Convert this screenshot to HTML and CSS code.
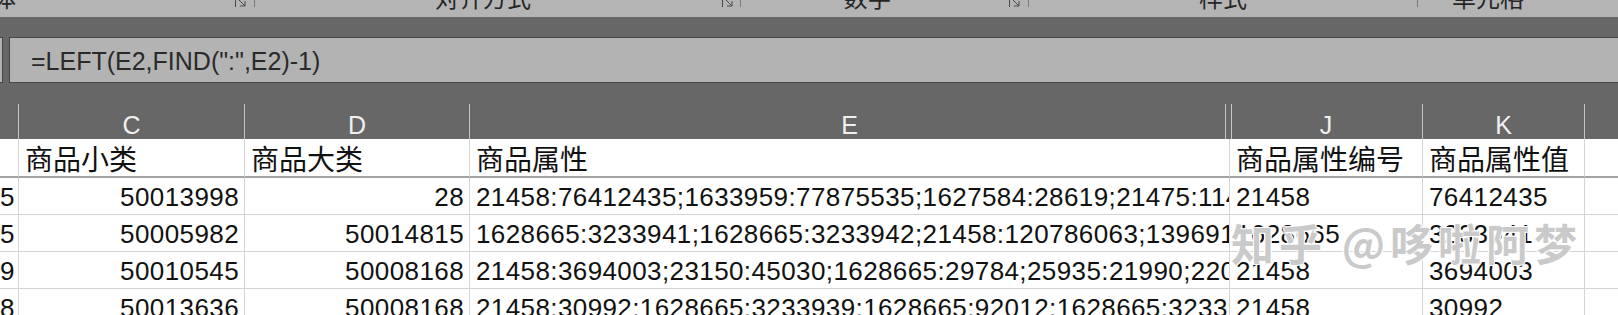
FILE: index.html
```html
<!DOCTYPE html>
<html lang="zh-CN">
<head>
<meta charset="utf-8">
<title>Excel</title>
<link rel="stylesheet" href="styles.css">
</head>
<body>
<div class="ribbon">
  <div class="grp g1"><span class="lbl">字体</span><svg class="launch" viewBox="0 0 13 13"><path d="M1 1.5H6M1.5 1V12M4 4L11 11M11 6V11H6" /></svg><i class="sep"></i></div>
  <div class="grp g2"><span class="lbl">对齐方式</span><svg class="launch" viewBox="0 0 13 13"><path d="M1 1.5H6M1.5 1V12M4 4L11 11M11 6V11H6" /></svg><i class="sep"></i></div>
  <div class="grp g3"><span class="lbl">数字</span><svg class="launch" viewBox="0 0 13 13"><path d="M1 1.5H6M1.5 1V12M4 4L11 11M11 6V11H6" /></svg><i class="sep"></i></div>
  <div class="grp g4"><span class="lbl">样式</span><i class="sep"></i></div>
  <div class="grp g5"><span class="lbl">单元格</span></div>
</div>

<div class="formula">
  <div class="namebox"></div>
  <div class="fx-input">=LEFT(E2,FIND(":",E2)-1)</div>
</div>

<div class="sheet">
  <div class="ch"></div>
  <div class="ch">C</div>
  <div class="ch">D</div>
  <div class="ch ch-e">E</div>
  <div class="ch ch-j">J</div>
  <div class="ch">K</div>
  <div class="ch ch-last"></div>

  <div class="hd"></div>
  <div class="hd">商品小类</div>
  <div class="hd">商品大类</div>
  <div class="hd">商品属性</div>
  <div class="hd">商品属性编号</div>
  <div class="hd">商品属性值</div>
  <div class="hd hd-last"></div>

  <div class="c num">5</div>
  <div class="c num">50013998</div>
  <div class="c num">28</div>
  <div class="c txt">21458:76412435;1633959:77875535;1627584:28619;21475:114968;20000:3271</div>
  <div class="c txt">21458</div>
  <div class="c txt">76412435</div>
  <div class="c last"></div>

  <div class="c num">5</div>
  <div class="c num">50005982</div>
  <div class="c num">50014815</div>
  <div class="c txt">1628665:3233941;1628665:3233942;21458:120786063;1396911:3233</div>
  <div class="c txt">1628665</div>
  <div class="c txt">3233941</div>
  <div class="c last"></div>

  <div class="c num">9</div>
  <div class="c num">50010545</div>
  <div class="c num">50008168</div>
  <div class="c txt">21458:3694003;23150:45030;1628665:29784;25935:21990;22000:3233</div>
  <div class="c txt">21458</div>
  <div class="c txt">3694003</div>
  <div class="c last"></div>

  <div class="c num">8</div>
  <div class="c num">50013636</div>
  <div class="c num">50008168</div>
  <div class="c txt">21458:30992;1628665:3233939;1628665:92012;1628665:3233940;2145</div>
  <div class="c txt">21458</div>
  <div class="c txt">30992</div>
  <div class="c last"></div>
</div>

<div class="watermark">知乎 @哆啦阿梦</div>
</body>
</html>
```

FILE: styles.css
```css
* { box-sizing: border-box; }

html, body {
  margin: 0;
  padding: 0;
}

body {
  width: 1618px;
  height: 315px;
  overflow: hidden;
  background: #676767;
  font-family: "Liberation Sans", "Noto Sans CJK SC", sans-serif;
  position: relative;
}

/* ribbon (clipped) */
.ribbon {
  height: 17px;
  background: #b4b4b4;
  display: grid;
  grid-template-columns: 255px 486px 288px 389px 1fr;
  overflow: hidden;
}

.grp {
  display: flex;
  align-items: flex-start;
  height: 17px;
  overflow: hidden;
}

.lbl {
  flex: 1;
  text-align: center;
  font-family: "Noto Sans CJK SC", sans-serif;
  font-size: 24px;
  line-height: 24px;
  margin-top: -15px;
  color: #262626;
  white-space: nowrap;
}

.g1 .lbl { text-align: left; margin-left: -32px; }
.g2 .lbl { padding-right: 10px; }
.g3 .lbl { padding-right: 14px; }
.g5 .lbl { padding-right: 60px; }

.launch {
  width: 13px;
  height: 13px;
  margin-top: -5px;
  fill: none;
  stroke: #4a4a4a;
  stroke-width: 1;
}

.g1 .launch { margin-right: 7px; }
.g2 .launch { margin-right: 6px; }
.g3 .launch { margin-right: 7px; }

.sep {
  width: 1px;
  height: 7px;
  background: #7a7a7a;
}

/* formula bar */
.formula {
  margin: 20px 0 21px;
  height: 46px;
  display: flex;
  gap: 6px;
}

.namebox {
  width: 3px;
  background: #b3b3b3;
  border: 1px solid #454545;
  border-left: none;
}

.fx-input {
  flex: 1;
  background: #b3b3b3;
  border: 1px solid #454545;
  border-right: none;
  padding: 3px 0 0 21px;
  display: flex;
  align-items: center;
  font-size: 25px;
  color: #2a2a2a;
  white-space: nowrap;
}

/* sheet grid */
.sheet {
  display: grid;
  grid-template-columns: 19px 226px 225px 760px 193px 162px 1fr;
}

.ch {
  height: 35px;
  padding-top: 7px;
  line-height: 28px;
  text-align: center;
  font-size: 25px;
  color: #f0f0f0;
  border-right: 1px solid #c4c4c4;
}

.ch-e {
  border-right-color: #676767;
  box-shadow: inset -3px 0 0 #676767, inset -4px 0 0 #c4c4c4;
}

.ch-j {
  box-shadow: inset 1px 0 0 #676767, inset 2px 0 0 #c4c4c4;
}

.ch-last { border-right: none; }

.hd {
  background: #fff;
  height: 39px;
  border-bottom: 2px solid #a2a2a2;
  border-right: 1px solid #d4d4d4;
  padding: 1px 0 0 6px;
  line-height: 36px;
  font-family: "Noto Sans CJK SC", sans-serif;
  font-size: 28px;
  color: #111;
  white-space: nowrap;
  overflow: hidden;
}

.hd-last { border-right: none; }

.c {
  background: #fff;
  height: 37px;
  border-bottom: 1px solid #d4d4d4;
  border-right: 1px solid #d4d4d4;
  padding-top: 3px;
  line-height: 33px;
  font-size: 26px;
  letter-spacing: 0.4px;
  color: #111;
  white-space: nowrap;
  overflow: hidden;
}

.num {
  text-align: right;
  padding-right: 5px;
}

.txt {
  padding-left: 6px;
}

.last { border-right: none; }

/* watermark overlay */
.watermark {
  position: absolute;
  left: 1231px;
  top: 217px;
  font-family: "Noto Sans CJK SC", sans-serif;
  font-size: 43px;
  font-weight: 700;
  line-height: 50px;
  letter-spacing: 5px;
  color: rgba(150, 150, 150, 0.5);
  text-shadow: 0 0 1px #fff, 1px 1px 0 rgba(255,255,255,0.9), -1px -1px 0 rgba(255,255,255,0.9), 1px -1px 0 rgba(255,255,255,0.9), -1px 1px 0 rgba(255,255,255,0.9);
  white-space: nowrap;
}
```
